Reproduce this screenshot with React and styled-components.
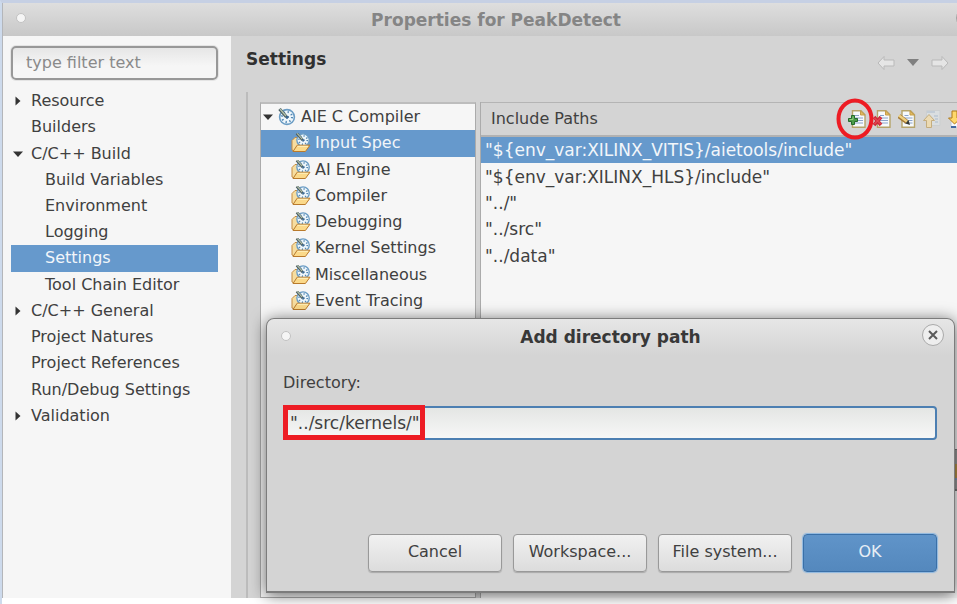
import React from "react";
import styled, { createGlobalStyle, css } from "styled-components";

const GlobalStyle = createGlobalStyle`
  *, *::before, *::after { box-sizing: border-box; }
  body {
    margin: 0;
    overflow: hidden;
    background: #fff;
    color: #404040;
    font: 16px/26px "DejaVu Sans", sans-serif;
  }
  button, input { font: inherit; color: inherit; }
  button { margin: 0; padding: 0; }
  svg { display: block; flex: none; }
`;

const blue = "#6699cc";

const Desktop = styled.div`
  position: relative;
  display: flex;
  flex-direction: column;
  height: 100vh;
  padding-bottom: 6px;
  border-top: 3px solid #c6d0e4;
  border-left: 2px solid #cddaec;
  overflow: hidden;
`;

const Window = styled.section`
  flex: 1;
  min-height: 0;
  display: flex;
  flex-direction: column;
  border-left: 1px solid #b4b6ba;
  background: #d4d4d4;
`;

const TitleBar = styled.header`
  position: relative;
  flex: none;
  display: flex;
  align-items: center;
  justify-content: center;
  height: 33px;
  padding-left: 32px;
  background: linear-gradient(#dedede, #c8c8c8);
  overflow: hidden;
`;

const Title = styled.h1`
  margin: 0;
  font-size: 17px;
  color: #858585;
`;

const Knob = styled.span`
  position: absolute;
  left: ${(p) => p.$left}px;
  top: ${(p) => p.$top}px;
  width: 10px;
  height: 10px;
  border: 1px solid #c2c2c2;
  border-radius: 50%;
  background: #f5f5f5;
`;

const EdgeButton = styled.button`
  position: absolute;
  right: -21px;
  top: 4px;
  width: 22px;
  height: 22px;
  border: 1px solid #a0a0a0;
  border-radius: 50%;
  background: #d8d8d8;
`;

const Columns = styled.div`
  flex: 1;
  min-height: 0;
  display: flex;
`;

const Sidebar = styled.nav`
  flex: none;
  width: 228px;
  padding: 10px 13px 0 8px;
  background: #f6f6f6;
`;

const Filter = styled.input`
  display: block;
  width: 100%;
  height: 34px;
  margin-bottom: 8px;
  padding: 0 13px 2px;
  border: 2px solid #989898;
  border-radius: 5px;
  box-shadow: 0 0 0 1px #e4e4e4;
  outline: none;
  background: linear-gradient(#e6e6e6, #f6f6f6 60%);
  &::placeholder { color: #8a8a8a; opacity: 1; }
`;

const Rows = styled.ul`
  display: grid;
  grid-auto-rows: 1fr;
  height: ${(p) => p.$height}px;
  margin: 0;
  padding: 0;
  font-size: ${(p) => p.$size || 16}px;
  list-style: none;
`;

const Row = styled.li`
  display: flex;
  align-items: center;
  min-height: 0;
  gap: ${(p) => p.$gap || 0}px;
  padding-left: ${(p) => p.$indent || 0}px;
  white-space: nowrap;
  ${(p) => p.$selected && css`background: ${blue}; color: #f2f6fa;`}
`;

const ArrowSlot = styled.span`
  flex: none;
  display: flex;
  justify-content: center;
  width: 14px;
`;

const Main = styled.main`
  flex: 1;
  min-width: 0;
  display: flex;
  flex-direction: column;
`;

const Heading = styled.div`
  flex: none;
  display: flex;
  justify-content: space-between;
  height: 56px;
  padding: 10px 8px 0 15px;
`;

const PageTitle = styled.h2`
  margin: 0;
  font-size: 17px;
  line-height: 26px;
  color: #303030;
`;

const History = styled.div`
  display: flex;
  align-items: center;
  height: 33px;
  gap: 12px;
`;

const PlainButton = styled.button`
  flex: none;
  border: 0;
  background: none;
`;

const Body = styled.div`
  flex: 1;
  min-height: 0;
  display: flex;
  gap: 4px;
  margin-left: 15px;
  padding: 10px 0 0 12px;
  border-left: 2px solid #bcbcbc;
`;

const TreePanel = styled.div`
  flex: none;
  width: 216px;
  border: 1px solid #ababab;
  border-top: 2px solid #bdbdbd;
  background: #f6f6f6;
`;

const PathPanel = styled.section`
  flex: 1;
  min-width: 0;
  display: flex;
  flex-direction: column;
  border-left: 1px solid #ababab;
  background: #f6f6f6;
`;

const PathHeader = styled.header`
  flex: none;
  display: flex;
  align-items: center;
  justify-content: space-between;
  height: 35px;
  padding-left: 10px;
  border-top: 1px solid #b4b4b4;
  border-bottom: 2px solid #b2b2b2;
  background: #d4d4d4;
`;

const PathTitle = styled.h3`
  margin: 0;
  font-size: 16px;
  font-weight: normal;
`;

const ToolbarFrame = styled.div`
  position: relative;
  flex: none;
  width: 109px;
`;

const Toolbar = styled.div`
  display: flex;
  gap: 7px;
  overflow: hidden;
`;

const Circle = styled.svg`
  position: absolute;
  left: -12px;
  top: -12px;
  pointer-events: none;
`;

const Dialog = styled.section`
  position: absolute;
  left: 264px;
  right: 2px;
  top: 315px;
  height: 275px;
  display: flex;
  flex-direction: column;
  border: 1px solid #7c7c7c;
  border-bottom-width: 2px;
  border-radius: 8px 8px 0 0;
  background: linear-gradient(#e6e6e6, #d4d4d4 36px);
  box-shadow: 0 2px 16px rgba(0, 0, 0, 0.6);
`;

const DialogTitle = styled.header`
  position: relative;
  flex: none;
  display: flex;
  align-items: center;
  justify-content: center;
  height: 36px;
`;

const DialogName = styled.h2`
  margin: 0;
  font-size: 17px;
  color: #383838;
`;

const CloseButton = styled.button`
  position: absolute;
  right: 10px;
  top: 5px;
  display: grid;
  place-items: center;
  width: 22px;
  height: 22px;
  border: 1px solid #aaa;
  border-radius: 50%;
  background: #eee;
`;

const DialogBody = styled.form`
  flex: 1;
  display: flex;
  flex-direction: column;
  padding: 15px 17px 19px 16px;
`;

const FieldLabel = styled.label`
  margin-bottom: 10px;
`;

const FieldFrame = styled.div`
  position: relative;
`;

const TextField = styled.input`
  display: block;
  width: 100%;
  height: 34px;
  padding: 0 5px 1px;
  border: 2px solid #4c7fb2;
  border-radius: 4px;
  outline: none;
  background: linear-gradient(#e4e6e4, #f7f7f7);
  font-size: 17px;
`;

const Highlight = styled.span`
  position: absolute;
  left: 0;
  top: -1px;
  width: 142px;
  height: 35px;
  border: 5px solid #ed1c24;
  pointer-events: none;
`;

const Actions = styled.div`
  display: flex;
  justify-content: flex-end;
  gap: 11px;
  margin-top: auto;
`;

const ActionButton = styled.button`
  width: 134px;
  height: 38px;
  padding-bottom: 3px;
  border: 1px solid #999;
  border-radius: 4px;
  background: linear-gradient(#f1f1f1, #dcdcdc);
  box-shadow: 0 1px 1px rgba(0, 0, 0, 0.2);
  ${(p) => p.$primary && css`
    border: 1px solid #3a70a8;
    background: linear-gradient(#6094c9, #5488bd);
    box-shadow: 0 0 1px 1px #8db7e0;
    color: #e8eef5;
  `}
`;

const BackPanel = styled.div`
  position: absolute;
  right: 0;
  top: 446px;
  width: 2px;
  height: 42px;
  border: solid #777;
  border-width: 1px 0 2px;
  background: linear-gradient(#999 14px, #b6924a 14px 28px, #7893b4 28px 30px, #999 30px);
`;

function Arrow({ open }) {
  return (
    <svg width="10" height="10" viewBox="0 0 10 10" fill="#333" aria-hidden="true">
      <path d={open ? "M0 2.5h10L5 8z" : "M2.5 0.500v9L7.500 5z"} />
    </svg>
  );
}

function Gauge() {
  return (
    <g>
      <circle cx="9" cy="9" r="7.4" fill="#eef6fb" stroke="#6a9cc4" strokeWidth="1.6" />
      <circle cx="9" cy="9" r="5" fill="none" stroke="#4f86b3" strokeWidth="2" strokeDasharray="1.3 2.63" />
      <path d="M1.500 1l7 8" stroke="#4a5d62" strokeWidth="3.2" />
      <path d="M2 1l6 7" stroke="#b4c2a8" strokeWidth="1.3" />
      <path d="M8 9h3M9 8v3" stroke="#2f5f8c" strokeWidth="1.4" />
    </g>
  );
}

function ToolIcon() {
  return (
    <svg width="18" height="18" viewBox="0 0 18 18" aria-hidden="true">
      <Gauge />
    </svg>
  );
}

function FolderIcon() {
  return (
    <svg width="20" height="20" viewBox="0 0 20 20" aria-hidden="true">
      <path d="M1 17V7.500l3-3h3l1 2h6v8L4 18.500z" fill="#f6dda0" stroke="#c48b40" />
      <g transform="translate(4.5 -0.5) scale(0.84)">
        <Gauge />
      </g>
      <path d="M2 18.500l4.200-6.300h12.800l-4.600 6.300z" fill="#fbd98a" stroke="#b97a2c" />
      <path d="M6.500 13.300h10.500" stroke="#fff0bd" />
    </svg>
  );
}

function Page() {
  return (
    <g>
      <path d="M4.500 .8h8.500l4 4v12.400H4.500z" fill="#f7fafc" stroke="#b6a46a" strokeWidth="1.4" />
      <path d="M12.500 1v4h4.400z" fill="#e3bd61" stroke="#c69d48" />
      <path d="M7 5.500h4M7 8h8M7 10.500h8M7 13h8" stroke="#8ba4cc" strokeWidth="1.2" />
    </g>
  );
}

function AddIcon() {
  return (
    <svg width="18" height="18" viewBox="0 0 18 18" aria-hidden="true">
      <Page />
      <path d="M3.500 5.500h3v3h3v3h-3v3h-3v-3h-3v-3h3z" fill="#4b9c49" stroke="#246b2b" />
      <path d="M5 6.500v3H1.500" stroke="#91cf82" fill="none" />
    </svg>
  );
}

function DeleteIcon() {
  return (
    <svg width="18" height="18" viewBox="0 0 18 18" aria-hidden="true">
      <Page />
      <path d="M1 7l7 8M8 7l-7 8" stroke="#cf2c3b" strokeWidth="3.600" />
      <path d="M1.500 8l6 6M7.500 8l-6 6" stroke="#ed5960" />
    </svg>
  );
}

function EditIcon() {
  return (
    <svg width="18" height="18" viewBox="0 0 18 18" aria-hidden="true">
      <g transform="translate(-0.5 0)"><Page /></g>
      <path d="M1 6l8 6" stroke="#a67a35" strokeWidth="4.600" />
      <path d="M1 5.500l8 6" stroke="#efd181" strokeWidth="2.400" />
      <path d="M7.500 13.500l3-3.500 1.500 5z" fill="#353832" />
    </svg>
  );
}

function MoveIcon({ down }) {
  return (
    <svg width="18" height="18" viewBox="0 0 18 18" aria-hidden="true">
      {down ? (
        <>
          <path d="M3 12v5h13v-5" fill="#f7fafc" stroke="#bcc8d8" />
          <path d="M3 17h5M11 17h5" stroke="#4169a2" strokeWidth="2" />
          <path d="M4 1h5v7h4l-6.500 6L0.500 8h3.500z" fill="#ffd86b" stroke="#af7819" />
        </>
      ) : (
        <>
          <path d="M3.500 .5h13.500v15H3.500z" fill="#dadee0" stroke="#cccfd0" />
          <path d="M4 2h8M11 6h4M12 9h3M12 12h3" stroke="#a9bacc" strokeWidth="1.200" />
          <path d="M6 4.500l5.500 6H8.500v7H3.500v-7H.5z" fill="#ecdab2" stroke="#c4ad7e" />
        </>
      )}
    </svg>
  );
}

function HistoryArrow({ forward }) {
  return (
    <svg width="18" height="16" viewBox="0 0 18 16" aria-hidden="true">
      <path
        d={forward ? "M17 8l-6-6.500v3.500H1v6h10v3.500z" : "M1 8l6-6.500v3.500h10v6H7v3.500z"}
        fill="#e5e5e5"
        stroke="#b9b9b9"
        strokeLinejoin="round"
      />
    </svg>
  );
}

const categories = [
  { label: "Resource", arrow: "closed" },
  { label: "Builders" },
  { label: "C/C++ Build", arrow: "open" },
  { label: "Build Variables", child: true },
  { label: "Environment", child: true },
  { label: "Logging", child: true },
  { label: "Settings", child: true, selected: true },
  { label: "Tool Chain Editor", child: true },
  { label: "C/C++ General", arrow: "closed" },
  { label: "Project Natures" },
  { label: "Project References" },
  { label: "Run/Debug Settings" },
  { label: "Validation", arrow: "closed" },
];

const tools = [
  "Input Spec",
  "AI Engine",
  "Compiler",
  "Debugging",
  "Kernel Settings",
  "Miscellaneous",
  "Event Tracing",
];

const paths = [
  '"${env_var:XILINX_VITIS}/aietools/include"',
  '"${env_var:XILINX_HLS}/include"',
  '"../"',
  '"../src"',
  '"../data"',
];

export default function App() {
  return (
    <>
      <GlobalStyle />
      <Desktop>
        <Window>
          <TitleBar>
            <Knob $left={13} $top={10} />
            <Title>Properties for PeakDetect</Title>
            <EdgeButton aria-label="Close window" />
          </TitleBar>
          <Columns>
            <Sidebar>
              <Filter aria-label="Filter" placeholder="type filter text" />
              <Rows $height={341}>
                {categories.map((c) => (
                  <Row key={c.label} $indent={c.child ? 34 : 0} $gap={6} $selected={c.selected}>
                    {!c.child && <ArrowSlot>{c.arrow && <Arrow open={c.arrow === "open"} />}</ArrowSlot>}
                    {c.label}
                  </Row>
                ))}
              </Rows>
            </Sidebar>
            <Main>
              <Heading>
                <PageTitle>Settings</PageTitle>
                <History>
                  <PlainButton aria-label="Back"><HistoryArrow /></PlainButton>
                  <PlainButton aria-label="History">
                    <svg width="12" height="7" viewBox="0 0 12 7" aria-hidden="true">
                      <path d="M0 0h12L6 7z" fill="#808080" />
                    </svg>
                  </PlainButton>
                  <PlainButton aria-label="Forward"><HistoryArrow forward /></PlainButton>
                </History>
              </Heading>
              <Body>
                <TreePanel>
                  <Rows $height={210}>
                    <Row $indent={2} $gap={5}>
                      <Arrow open />
                      <ToolIcon />
                      AIE C Compiler
                    </Row>
                    {tools.map((t, i) => (
                      <Row key={t} $indent={30} $gap={4} $selected={i === 0}>
                        <FolderIcon />
                        {t}
                      </Row>
                    ))}
                  </Rows>
                </TreePanel>
                <PathPanel>
                  <PathHeader>
                    <PathTitle>Include Paths</PathTitle>
                    <ToolbarFrame>
                      <Toolbar>
                        <PlainButton aria-label="Add"><AddIcon /></PlainButton>
                        <PlainButton aria-label="Delete"><DeleteIcon /></PlainButton>
                        <PlainButton aria-label="Edit"><EditIcon /></PlainButton>
                        <PlainButton aria-label="Move up"><MoveIcon /></PlainButton>
                        <PlainButton aria-label="Move down"><MoveIcon down /></PlainButton>
                      </Toolbar>
                      <Circle width="38" height="42" viewBox="0 0 38 42" aria-hidden="true">
                        <ellipse cx="19" cy="21" rx="16.500" ry="18.500" fill="none" stroke="#ed1c24" strokeWidth="4" />
                      </Circle>
                    </ToolbarFrame>
                  </PathHeader>
                  <Rows $height={132} $size={17}>
                    {paths.map((p, i) => (
                      <Row key={p} $indent={4} $selected={i === 0}>{p}</Row>
                    ))}
                  </Rows>
                </PathPanel>
              </Body>
            </Main>
          </Columns>
        </Window>
        <BackPanel />
        <Dialog role="dialog" aria-labelledby="dialog-name">
          <DialogTitle>
            <Knob $left={14} $top={12} />
            <DialogName id="dialog-name">Add directory path</DialogName>
            <CloseButton aria-label="Close">
              <svg width="10" height="10" viewBox="0 0 10 10" aria-hidden="true">
                <path d="M1 1l8 8M9 1L1 9" stroke="#5a5a5a" strokeWidth="2" />
              </svg>
            </CloseButton>
          </DialogTitle>
          <DialogBody onSubmit={(e) => e.preventDefault()}>
            <FieldLabel htmlFor="directory">Directory:</FieldLabel>
            <FieldFrame>
              <TextField id="directory" defaultValue={'"../src/kernels/"'} />
              <Highlight />
            </FieldFrame>
            <Actions>
              <ActionButton type="button">Cancel</ActionButton>
              <ActionButton type="button">Workspace...</ActionButton>
              <ActionButton type="button">File system...</ActionButton>
              <ActionButton type="submit" $primary>OK</ActionButton>
            </Actions>
          </DialogBody>
        </Dialog>
      </Desktop>
    </>
  );
}
